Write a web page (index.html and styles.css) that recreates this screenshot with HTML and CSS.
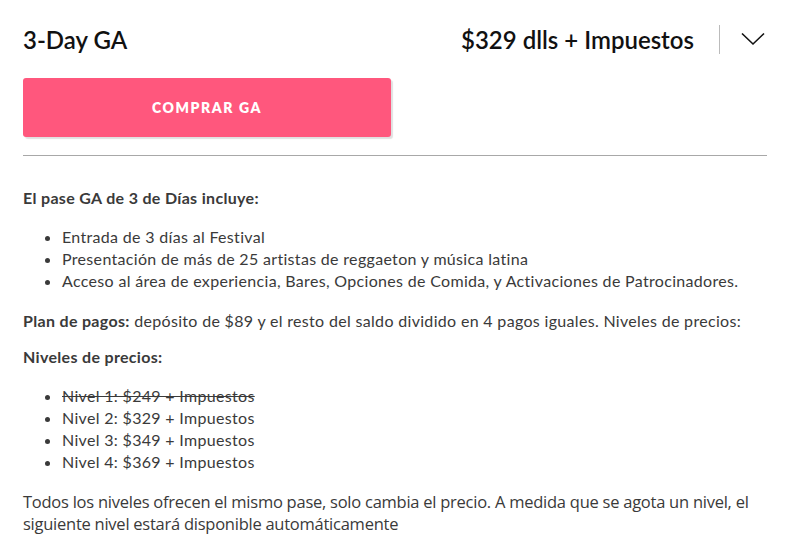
FILE: index.html
```html
<!DOCTYPE html>
<html lang="es">
<head>
<meta charset="utf-8">
<link rel="stylesheet" href="styles.css">
</head>
<body>
<div class="ticket">
  <div class="head">
    <h2 class="title">3-Day GA</h2>
    <div class="price-wrap">
      <span class="price">$329 dlls + Impuestos</span>
      <span class="sep"></span>
      <svg class="chev" width="24" height="14" viewBox="0 0 24 14"><path d="M1 1.5 L12 12 L23 1.5" fill="none" stroke="#111" stroke-width="1.6"/></svg>
    </div>
  </div>
  <button class="buy">COMPRAR GA</button>
  <hr class="rule">
  <div class="details">
    <p class="b">El pase GA de 3 de Días incluye:</p>
    <ul>
      <li>Entrada de 3 días al Festival</li>
      <li>Presentación de más de 25 artistas de reggaeton y música latina</li>
      <li>Acceso al área de experiencia, Bares, Opciones de Comida, y Activaciones de Patrocinadores.</li>
    </ul>
    <p><b>Plan de pagos:</b> depósito de $89 y el resto del saldo dividido en 4 pagos iguales. Niveles de precios:</p>
    <p class="b">Niveles de precios:</p>
    <ul>
      <li><s>Nivel 1: $249 + Impuestos</s></li>
      <li>Nivel 2: $329 + Impuestos</li>
      <li>Nivel 3: $349 + Impuestos</li>
      <li>Nivel 4: $369 + Impuestos</li>
    </ul>
    <p class="note">Todos los niveles ofrecen el mismo pase, solo cambia el precio. A medida que se agota un nivel, el siguiente nivel estará disponible automáticamente</p>
  </div>
</div>
</body>
</html>
```
FILE: styles.css
```css
html, body { margin: 0; padding: 0; background: #fff; }
body { font-family: "Lato", "Noto Sans", sans-serif; color: #3a3a3a; }
.ticket { padding: 0 21px 0 23px; }
.head { display: flex; justify-content: space-between; align-items: center; height: 78px; }
.title { margin: 0; font-size: 24px; font-weight: 600; color: #111; }
.price-wrap { display: flex; align-items: center; }
.price { font-size: 24px; font-weight: 600; color: #111; }
.sep { width: 1px; height: 29px; background: #bbb; margin: 0 21px 0 25px; }
.chev { display: block; margin-right: 2px; }
.buy { display: block; width: 368px; height: 59px; border: 0; border-radius: 3px; background: #ff577d; color: #fff; font-family: "Lato", sans-serif; font-weight: 800; font-size: 14px; letter-spacing: 1.6px; box-shadow: 2px 2px 1px rgba(0,0,0,0.12); padding: 0; }
.rule { border: 0; border-top: 1px solid #a8a8a8; margin: 18px 0 0; }
.details { font-size: 16px; line-height: 22px; letter-spacing: 0.32px; padding-top: 31px; }
.details p { margin: 0 0 14px; }
.details .b, .details b { font-weight: 700; }
.details ul { margin: 17px 0 18px; padding-left: 39px; }
.note { font-family: "Open Sans", sans-serif; letter-spacing: -0.25px; font-size: 16.5px; }
```
